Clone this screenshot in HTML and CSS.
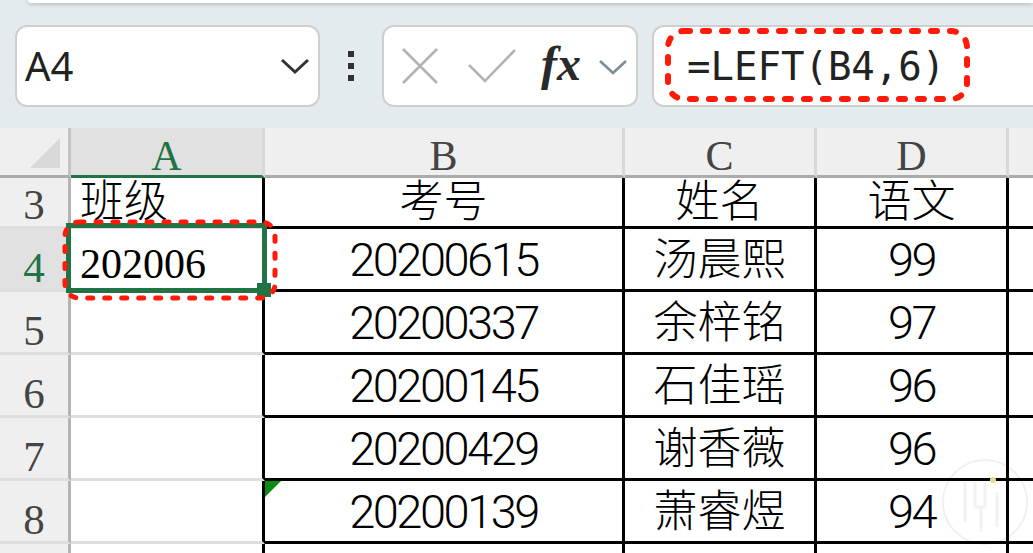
FILE: index.html
```html
<!DOCTYPE html>
<html lang="zh-CN">
<head>
<meta charset="utf-8">
<title>Sheet</title>
<link rel="stylesheet" href="styles.css">
</head>
<body>
<div class="top">
  <div class="ribbon-edge"></div>
  <div class="bar">
    <div class="namebox">
      <span class="name">A4</span>
      <svg class="chev" width="30" height="18" viewBox="0 0 30 18"><path d="M2 3 L15 15 L28 3" fill="none" stroke="#333" stroke-width="3"/></svg>
    </div>
    <div class="grip"><i></i><i></i><i></i></div>
    <div class="fxbox">
      <svg class="ico-x" width="36" height="36" viewBox="0 0 36 36"><path d="M1 1 L35 35 M35 1 L1 35" stroke="#b3b3b3" stroke-width="2.6" fill="none"/></svg>
      <svg class="ico-ok" width="48" height="36" viewBox="0 0 48 36"><path d="M1 17 L17 33 L47 2" stroke="#b3b3b3" stroke-width="2.6" fill="none"/></svg>
      <span class="fx">fx</span>
      <svg class="ico-dd" width="28" height="16" viewBox="0 0 28 16"><path d="M1 2 L14 14 L27 2" stroke="#7c8c96" stroke-width="2.6" fill="none"/></svg>
    </div>
    <div class="formula">
      <span class="ftext">=LEFT(B4,6)</span>
      <svg class="mark-f" width="305" height="74" viewBox="0 0 305 74"><rect x="3" y="3" width="299" height="68" rx="16" fill="none" stroke="#ff1a0a" stroke-width="6" stroke-dasharray="6 13" stroke-linecap="round"/></svg>
    </div>
  </div>
</div>

<div class="sheet">
  <div class="grid">
    <div class="corner"><span class="tri"></span></div>
    <div class="ch ch-sel">A</div>
    <div class="ch">B</div>
    <div class="ch">C</div>
    <div class="ch">D</div>
    <div class="ch ch-e"></div>

    <div class="rh rh-3">3</div>
    <div class="c ca r3 t-cjk-l">班级</div>
    <div class="c cb r3 t-cjk">考号</div>
    <div class="c cb r3 t-cjk">姓名</div>
    <div class="c cb r3 t-cjk">语文</div>
    <div class="c ce"></div>

    <div class="rh rh-sel">4</div>
    <div class="c ca t-serif">202006</div>
    <div class="c cb t-num">20200615</div>
    <div class="c cb t-cjk">汤晨熙</div>
    <div class="c cb t-num">99</div>
    <div class="c ce"></div>

    <div class="rh">5</div>
    <div class="c ca"></div>
    <div class="c cb t-num">20200337</div>
    <div class="c cb t-cjk">余梓铭</div>
    <div class="c cb t-num">97</div>
    <div class="c ce"></div>

    <div class="rh">6</div>
    <div class="c ca"></div>
    <div class="c cb t-num">20200145</div>
    <div class="c cb t-cjk">石佳瑶</div>
    <div class="c cb t-num">96</div>
    <div class="c ce"></div>

    <div class="rh">7</div>
    <div class="c ca"></div>
    <div class="c cb t-num">20200429</div>
    <div class="c cb t-cjk">谢香薇</div>
    <div class="c cb t-num">96</div>
    <div class="c ce"></div>

    <div class="rh">8</div>
    <div class="c ca"></div>
    <div class="c cb t-num note">20200139</div>
    <div class="c cb t-cjk">萧睿煜</div>
    <div class="c cb t-num">94</div>
    <div class="c ce"></div>

    <div class="rh"></div>
    <div class="c ca"></div>
    <div class="c cb"></div>
    <div class="c cb"></div>
    <div class="c cb"></div>
    <div class="c ce"></div>
  </div>

  <div class="sel"><span class="handle"></span></div>
  <svg class="mark-a" width="216" height="82" viewBox="0 0 216 82"><rect x="3" y="3" width="210" height="76" rx="14" fill="none" stroke="#ff1a0a" stroke-width="5" stroke-dasharray="5 12" stroke-linecap="round"/></svg>
  <svg class="wm" width="100" height="100" viewBox="0 0 100 100">
    <circle cx="50" cy="50" r="42" fill="none" stroke="rgba(0,0,0,0.06)" stroke-width="2"/>
    <path d="M30 30 L30 70 M40 30 L40 55 L50 55 L50 30 M46 55 L46 80 M62 40 L62 75" fill="none" stroke="rgba(0,0,0,0.05)" stroke-width="3"/>
    <circle cx="58" cy="28" r="3" fill="#e6dd8a"/>
  </svg>
</div>
</body>
</html>
```

FILE: styles.css
```css
* { box-sizing: border-box; margin: 0; padding: 0; }
html, body { width: 1033px; height: 553px; overflow: hidden; background: #fff; }
body { font-family: "Noto Sans", "Liberation Sans", sans-serif; color: #000; }

/* ---------- top toolbar ---------- */
.top { height: 128px; background: #e4ebee; overflow: hidden; }
.ribbon-edge {
  height: 3px; margin-left: 28px; background: #fff;
  border-bottom-left-radius: 6px;
  box-shadow: 0 1px 4px rgba(0,0,0,.28);
}
.bar { display: flex; align-items: center; padding: 22px 0 0 15px; }
.namebox {
  width: 305px; height: 82px; flex: none;
  background: #fff; border: 2px solid #cfcfcf; border-radius: 12px;
  display: flex; align-items: center; justify-content: space-between;
  padding: 0 8px 0 8px;
}
.name { font-size: 40px; line-height: 1; color: #222; font-weight: 400; }
.grip { margin-left: 28px; display: flex; flex-direction: column; gap: 6px; flex: none; }
.grip i { display: block; width: 6px; height: 6px; background: #333; }
.fxbox {
  margin-left: 28px; width: 256px; height: 82px; flex: none;
  background: #fff; border: 2px solid #cfcfcf; border-radius: 12px;
  display: flex; align-items: center; padding-left: 18px;
}
.ico-ok { margin-left: 30px; }
.fx {
  margin-left: 25px; font-family: "Liberation Serif", serif; font-style: italic; font-weight: 700;
  font-size: 48px; line-height: 1; color: #2a2a2a; margin-top: -4px;
}
.ico-dd { margin-left: 18px; margin-top: 2px; }
.formula {
  position: relative; margin-left: 14px; width: 420px; height: 82px; flex: none;
  background: #fff; border: 2px solid #cfcfcf; border-radius: 12px;
  display: flex; align-items: center; padding-left: 33px;
}
.ftext { font-family: "DejaVu Sans Mono", "Liberation Mono", monospace; font-size: 39px; line-height: 1; color: #222; }
.mark-f { position: absolute; left: 11px; top: 1px; }

/* ---------- sheet ---------- */
.sheet { position: relative; height: 425px; overflow: hidden; }
.grid {
  display: grid;
  grid-template-columns: 71px 194px 360px 192px 192px 1fr;
  grid-template-rows: 50px 51px 63px 63px 63px 63px 63px 63px;
}
.corner { background: #efefef; border-right: 3px solid #c4c4c4; border-bottom: 3px solid #ababab; position: relative; }
.tri {
  position: absolute; left: 30px; top: 10px; width: 0; height: 0;
  border-left: 30px solid transparent; border-bottom: 30px solid #d9d9d9;
}
.ch {
  background: #efefef; border-right: 3px solid #d8d8d8; border-bottom: 3px solid #ababab;
  font-family: "Liberation Serif", serif; font-size: 42px; line-height: 37px; color: #444;
  text-align: center; padding-top: 10px;
}
.ch-sel { background: #e1e1e1; border-bottom-color: #217346; color: #217346; }
.ch-e { border-right: 0; }

.rh {
  background: #efefef; border-right: 3px solid #b4b4b4; border-bottom: 3px solid #dedede;
  font-family: "Liberation Serif", serif; font-size: 43px; line-height: 43px; color: #444;
  display: flex; align-items: flex-end; justify-content: center;
}
.rh-sel { background: #e1e1e1; color: #217346; }

.c {
  position: relative; display: flex; align-items: flex-end; justify-content: center;
  border-bottom: 3px solid #000; border-right: 3px solid #000;
}
.ca { border-bottom-color: #dedede; justify-content: flex-start; padding-left: 9px; }
.ce { border-right: 0; }

.t-cjk, .t-cjk-l {
  font-family: "Noto Sans CJK SC", sans-serif; font-size: 44px; line-height: 44px; font-weight: 300;
  padding-bottom: 11px;
}
.r3 { line-height: 38px; padding-bottom: 9px; }
.t-serif { font-family: "Liberation Serif", serif; font-size: 42px; line-height: 42px; padding-bottom: 4px; }
.t-num {
  font-family: Roboto, "Liberation Sans", sans-serif; font-size: 47px; line-height: 46px;
  letter-spacing: -2.5px; padding-bottom: 6px; font-weight: 300;
}

.note::before {
  content: ""; position: absolute; left: 0; top: 0; width: 0; height: 0;
  border-top: 16px solid #0a8a10; border-right: 16px solid transparent;
}

.sel {
  position: absolute; left: 66px; top: 95px; width: 201px; height: 70px;
  border: 5px solid #217346;
}
.handle {
  position: absolute; right: -9px; bottom: -9px; width: 14px; height: 14px;
  background: #217346;
}
.mark-a { position: absolute; left: 62px; top: 91px; }
.wm { position: absolute; left: 935px; top: 324px; }
```
